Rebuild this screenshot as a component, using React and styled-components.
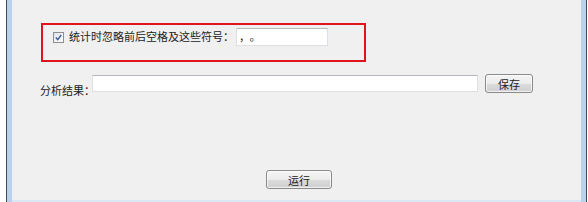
import React from "react";
import styled, { createGlobalStyle } from "styled-components";

const GlobalStyle = createGlobalStyle`
  html, body {
    margin: 0;
    padding: 0;
    background: #ffffff;
  }
  body {
    font-family: "Noto Sans CJK SC", "Noto Sans", sans-serif;
    font-size: 11px;
    color: #222222;
  }
`;

const App = () => {
  return (
    <>
      <GlobalStyle />
      <Window>
        <Content>
          <OptionBox>
            <CheckBox>
              <svg width="7" height="7" viewBox="0 0 7 7">
                <path d="M0.8 3.6 L2.8 5.6 L6.2 1" fill="none" stroke="#3c5a9a" strokeWidth="1.4" />
              </svg>
            </CheckBox>
            <Label gap={2}>统计时忽略前后空格及这些符号：</Label>
            <TextBox width={92} height={18} spacing={5}>，。</TextBox>
          </OptionBox>

          <ResultRow>
            <Label offset={9} width={52} gap={0}>分析结果：</Label>
            <TextBox width={386} height={17} />
            <Button width={48}>保存</Button>
          </ResultRow>

          <Footer>
            <Button width={66}>运行</Button>
          </Footer>
        </Content>
      </Window>
    </>
  );
};

export default App;

const Window = styled.div`
  margin-left: 6px;
  width: 581px;
  height: 202px;
  border-left: 1px solid #3f4a55;
  border-right: 1px solid #3f4a55;
  background: #b9d1ea;
  padding: 0 5px;
  box-sizing: border-box;
  display: flex;
`;

const Content = styled.div`
  flex: 1;
  height: 200px;
  background: #f0f0f0;
  border-bottom: 2px solid #d9e6f4;
  display: flex;
  flex-direction: column;
`;

const OptionBox = styled.div`
  margin: 23px 0 0 29px;
  width: 325px;
  height: 39px;
  box-sizing: border-box;
  border: 2px solid #e0141c;
  padding: 3px 0 0 10px;
  display: flex;
  align-items: flex-start;
`;

const CheckBox = styled.div`
  width: 9px;
  height: 9px;
  margin: 4px 5px 0 0;
  border: 1px solid #8f8f8f;
  background: linear-gradient(135deg, #dfe3e8, #ffffff);
  display: flex;
  align-items: center;
  justify-content: center;
  flex-shrink: 0;
`;

const Label = styled.span`
  display: block;
  margin-top: ${({ offset }) => offset || 1}px;
  margin-right: ${({ gap }) => gap}px;
  width: ${({ width }) => (width ? `${width}px` : "auto")};
  line-height: 14px;
  white-space: nowrap;
  flex-shrink: 0;
`;

const TextBox = styled.div`
  width: ${({ width }) => width}px;
  height: ${({ height }) => height}px;
  box-sizing: border-box;
  background: #ffffff;
  border: 1px solid #dcdfe4;
  border-top-color: #b4b7bd;
  padding: 0 2px;
  line-height: 15px;
  font-size: 11px;
  letter-spacing: ${({ spacing }) => spacing || 0}px;
  color: #222222;
  flex-shrink: 0;
`;

const ResultRow = styled.div`
  margin: 12px 0 0 28px;
  display: flex;
  align-items: flex-start;

  & > ${TextBox} {
    margin-top: 1px;
  }

  & > button {
    margin-left: 7px;
  }
`;

const Button = styled.button`
  width: ${({ width }) => width}px;
  height: 19px;
  padding: 0;
  border: 1px solid #8a8a8a;
  border-radius: 3px;
  background: linear-gradient(#f5f5f5 0%, #ebebeb 50%, #dcdcdc 51%, #cfcfcf 100%);
  box-shadow: inset 0 0 0 1px rgba(255, 255, 255, 0.7);
  font-family: "Noto Sans CJK SC", "Noto Sans", sans-serif;
  font-size: 11px;
  line-height: 16px;
  color: #222222;
`;

const Footer = styled.div`
  margin-top: 73px;
  padding-left: 5px;
  display: flex;
  justify-content: center;
`;
